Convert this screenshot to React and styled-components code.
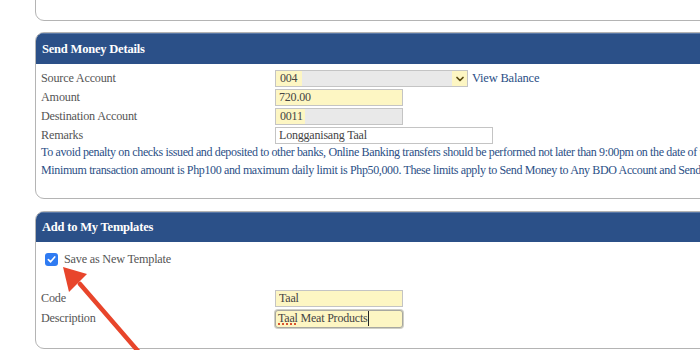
import React from "react";
import styled, { createGlobalStyle } from "styled-components";
import { ChevronDown } from "lucide-react";

const GlobalStyle = createGlobalStyle`
  html, body {
    margin: 0;
    padding: 0;
    overflow: hidden;
    background: #fff;
    font-family: "Liberation Serif", "Times New Roman", serif;
  }
`;

const Page = styled.div`
  position: relative;
  width: 700px;
  height: 350px;
  overflow: hidden;
  padding-left: 35px;
  box-sizing: border-box;
`;

const Card = styled.div`
  width: 720px;
  border: 1px solid #b4b4b4;
  border-radius: 9px;
  margin-top: ${(p) => p.$gap || 0}px;
  overflow: hidden;
  box-sizing: border-box;
`;

const TopCard = styled(Card)`
  height: 51px;
  margin-top: -30px;
`;

const Header = styled.div`
  height: ${(p) => p.$h || 31}px;
  background: #2b5088;
  border-top: 1px solid #5a78a6;
  color: #fff;
  font-weight: bold;
  font-size: 12.5px;
  letter-spacing: -0.2px;
  display: flex;
  align-items: center;
  padding-left: 6px;
  box-sizing: border-box;
`;

const Body = styled.div`
  padding: ${(p) => p.$pad || "5px 0 19px 5px"};
`;

const Row = styled.div`
  display: grid;
  grid-template-columns: 234px auto;
  align-items: center;
  height: ${(p) => p.$h || 19}px;
  font-size: 12.2px;
  letter-spacing: -0.2px;
  color: #555;
`;

const Field = styled.div`
  display: flex;
  align-items: center;
  gap: 4px;
`;

const Input = styled.input`
  width: ${(p) => p.$w}px;
  height: 17px;
  box-sizing: border-box;
  border: 1px solid #c4c4c4;
  background: ${(p) => p.$bg || "#fff"};
  font-family: "Liberation Serif", serif;
  font-size: 12px;
  letter-spacing: -0.2px;
  color: #444;
  padding: 0 3px;
  margin: 0;
  outline: none;
`;

const MaskBox = styled.div`
  width: ${(p) => p.$w}px;
  height: 17px;
  box-sizing: border-box;
  border: 1px solid #c4c4c4;
  background: #e9e9e9;
  display: flex;
  align-items: center;
  font-size: 12px;
  color: #444;
`;

const Filled = styled.span`
  background: #fdf6c3;
  height: 100%;
  display: flex;
  align-items: center;
  padding: 0 ${(p) => p.$right || 2}px 0 4px;
`;

const Arrow = styled.span`
  margin-left: auto;
  height: 100%;
  width: 15px;
  background: #fdf6c3;
  display: flex;
  align-items: center;
  justify-content: center;
  color: #5a4a10;
`;

const Link = styled.a`
  color: #2b4f86;
  font-size: 12.5px;
  letter-spacing: -0.2px;
  text-decoration: none;
`;

const Notice = styled.p`
  margin: -2px 0 0;
  color: #2b4f86;
  font-size: 12px;
  letter-spacing: -0.36px;
  line-height: 18px;
  white-space: nowrap;
`;

const CheckRow = styled.label`
  display: flex;
  align-items: center;
  gap: 6px;
  font-size: 12.2px;
  letter-spacing: -0.2px;
  color: #555;
  padding-left: 4px;
  height: 20px;
  margin-bottom: 20px;
`;

const Check = styled.span`
  width: 13px;
  height: 13px;
  border-radius: 3px;
  background: #2f7bf2;
  display: flex;
  align-items: center;
  justify-content: center;
`;

const Overlay = styled.svg`
  position: absolute;
  left: 0;
  top: 0;
  pointer-events: none;
`;

const Squiggle = styled.span`
  text-decoration: underline dotted #d9532c;
  text-decoration-thickness: 2px;
  text-underline-offset: 1px;
`;

const Caret = styled.span`
  border-right: 1px solid #222;
`;

const RichInput = styled.div`
  width: 128px;
  height: 18px;
  box-sizing: border-box;
  border: 1px solid #a8a8a0;
  border-radius: 3px;
  box-shadow: 0 0 0 1px #cfcfc6;
  background: #fdf6c3;
  font-size: 12px;
  letter-spacing: -0.2px;
  color: #444;
  padding: 0 2px;
  display: flex;
  align-items: center;
  white-space: nowrap;
`;

export default function App() {
  return (
    <>
      <GlobalStyle />
      <Page>
        <TopCard />
        <Card $gap={11}>
          <Header>Send Money Details</Header>
          <Body>
            <Row>
              <span>Source Account</span>
              <Field>
                <MaskBox $w={193}>
                  <Filled $right={5}>004</Filled>
                  <Arrow>
                    <ChevronDown size={12} strokeWidth={3.5} />
                  </Arrow>
                </MaskBox>
                <Link href="#">View Balance</Link>
              </Field>
            </Row>
            <Row>
              <span>Amount</span>
              <Input $w={128} $bg="#fdf6c3" value="720.00" readOnly />
            </Row>
            <Row>
              <span>Destination Account</span>
              <MaskBox $w={128}>
                <Filled>0011</Filled>
              </MaskBox>
            </Row>
            <Row>
              <span>Remarks</span>
              <Input $w={218} value="Longganisang Taal" readOnly />
            </Row>
            <Notice>
              To avoid penalty on checks issued and deposited to other banks, Online Banking transfers should be performed not later than 9:00pm on the date of the check.
              <br />
              Minimum transaction amount is Php100 and maximum daily limit is Php50,000. These limits apply to Send Money to Any BDO Account and Send Money to Other Banks.
            </Notice>
          </Body>
        </Card>
        <Card $gap={12}>
          <Header $h={30}>Add to My Templates</Header>
          <Body $pad="7px 0 19px 5px">
            <CheckRow>
              <Check>
                <svg width="9" height="9" viewBox="0 0 10 10">
                  <path d="M1.5 5.2 L4 7.6 L8.6 2.2" fill="none" stroke="#fff" strokeWidth="1.8" strokeLinecap="round" strokeLinejoin="round" />
                </svg>
              </Check>
              Save as New Template
            </CheckRow>
            <Row>
              <span>Code</span>
              <Input $w={128} $bg="#fdf6c3" value="Taal" readOnly />
            </Row>
            <Row $h={21}>
              <span>Description</span>
              <RichInput>
                <Caret>
                  <Squiggle>Taal</Squiggle> Meat Products
                </Caret>
              </RichInput>
            </Row>
          </Body>
        </Card>
        <Overlay width="700" height="350" viewBox="0 0 700 350">
          <line x1="144" y1="358" x2="80" y2="284" stroke="#e8452b" strokeWidth="4.5" strokeLinecap="round" />
          <polygon points="63,267 87,274 69,292" fill="#e8452b" />
        </Overlay>
      </Page>
    </>
  );
}
